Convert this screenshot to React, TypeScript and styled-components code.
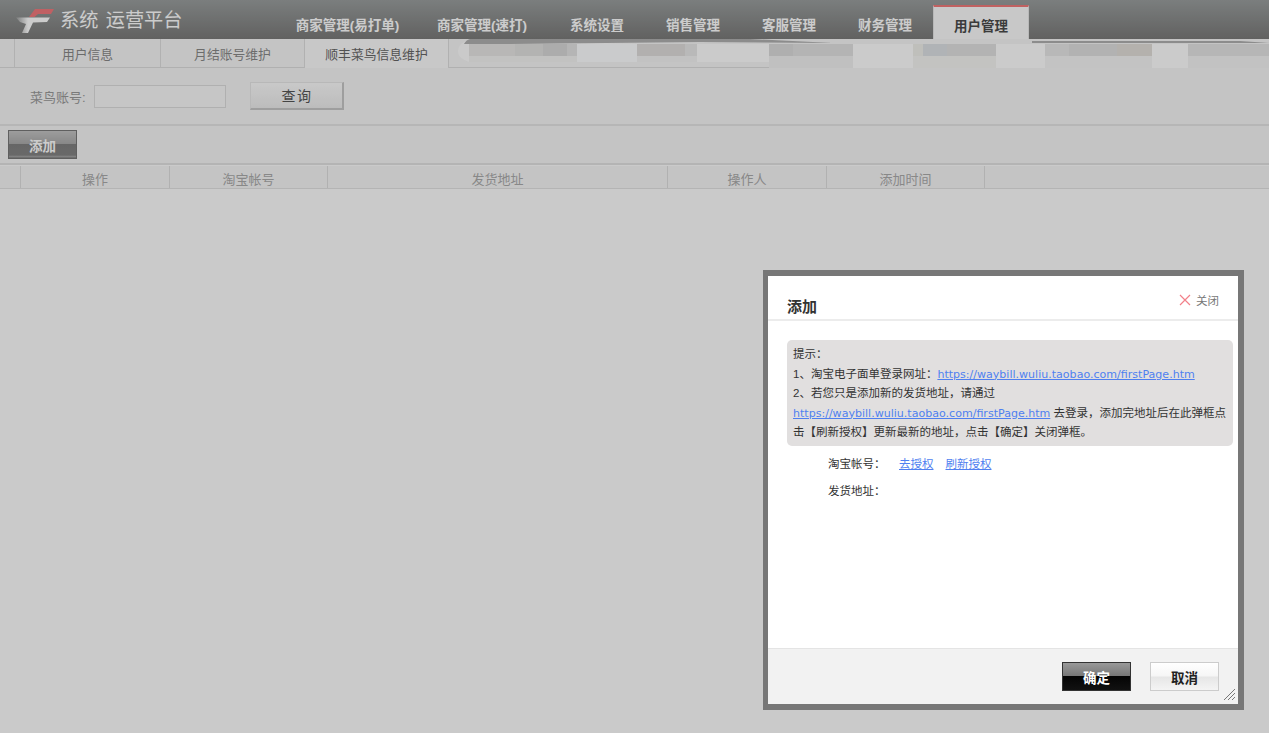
import React from "react";
import styled, { createGlobalStyle } from "styled-components";

const Global = createGlobalStyle`
  html, body { margin: 0; padding: 0; height: 100%; background: #fdfdfd; overflow: hidden; }
  body { font-family: "Liberation Sans", "Noto Sans CJK SC", sans-serif; }
  #root { height: 100%; }
  * { box-sizing: border-box; }
`;

const Page = styled.div`height: 733px; display: flex; flex-direction: column; position: relative; overflow: hidden;`;
const Header = styled.header`
  height: 39px; flex: none; display: flex; background: linear-gradient(#9a9e9e, #7a7a79);
`;
const Brand = styled.div`
  width: 280px; flex: none; display: flex; align-items: flex-start; padding: 8px 0 0 15px; gap: 5px;
  color: #fff; font-size: 19.2px; line-height: 26px; white-space: pre; word-spacing: 2px;
`;
const NavTab = styled.div<{ $active?: boolean; $w: number }>`
  width: ${p => p.$w}px; flex: none; display: flex; align-items: center; justify-content: center;
  font-size: 13.5px; font-weight: 700; padding-top: ${p => p.$active ? "4px" : "9px"};
  margin-top: ${p => p.$active ? "5px" : "0"};
  color: ${p => p.$active ? "#4a4a4a" : "#fff"};
  background: ${p => p.$active ? "#fbfbfb" : "transparent"};
  border-top: ${p => p.$active ? "2px solid #f07a7a" : "none"};
  border-left: ${p => p.$active ? "1px solid #e6e6e6" : "none"};
  border-right: ${p => p.$active ? "1px solid #e6e6e6" : "none"};
`;
const SubBar = styled.div`
  height: 29px; flex: none; display: flex; padding-left: 14px; background: #f6f6f6; border-bottom: 1px solid #dcdcdc;
`;
const SubTab = styled.div<{ $active?: boolean; $w: number }>`
  width: ${p => p.$w}px; flex: none; display: flex; align-items: center; justify-content: center;
  font-size: 12.8px; color: ${p => p.$active ? "#666" : "#888"};
  border-left: 1px solid #dedede; margin-bottom: ${p => p.$active ? "-1px" : "0"};
  background: ${p => p.$active ? "#fbfbfb" : "transparent"};
  border-right: ${p => p.$active ? "1px solid #dedede" : "none"};
`;
const Mosaic = styled.svg`position: absolute; left: 450px; top: 38px; display: block;`;
const QueryBar = styled.div`
  height: 58px; flex: none; display: flex; align-items: center; padding: 0 0 0 30px;
  background: #f5f5f5; border-bottom: 2px solid #e4e4e4;
`;
const QueryLabel = styled.label`font-size: 13px; color: #999; width: 64px; flex: none;`;
const QueryInput = styled.div`
  width: 132px; height: 23px; margin-top: 1px; border: 1px solid #ddd; background: #f8f8f8;
`;
const QueryButton = styled.button`
  width: 94px; height: 28px; margin: -1px 0 0 24px; padding: 0 0 0 1px; font: inherit; font-size: 14px; color: #555; letter-spacing: 1.5px;
  border: 1px solid #e6e6e6; border-right: 2px solid #c6c6c6; border-bottom: 2px solid #c6c6c6;
  background: linear-gradient(#fbfbfb, #ececec);
`;
const ActionBar = styled.div`
  height: 39px; flex: none; display: flex; align-items: flex-start; padding: 4px 0 0 8px;
  background: #f5f5f5; border-bottom: 2px solid #e2e2e2;
`;
const AddButton = styled.button`
  width: 69px; height: 29px; padding: 0; font: inherit; font-size: 13.5px; font-weight: 700; color: #fff;
  border: 1px solid #777; background: linear-gradient(#c4c4c4 0, #aaa 48%, #808080 50%, #848484 90%, #aaa 93%, #808080 100%);
`;
const TableHead = styled.div`
  height: 23px; flex: none; display: flex; padding-left: 20px; background: #f6f6f6; border-bottom: 1px solid #e2e2e2; margin-top: 1px; 
`;
const HeadCell = styled.div<{ $w: number }>`
  width: ${p => p.$w}px; flex: none; display: flex; align-items: center; justify-content: center;
  font-size: 13px; color: #aaa; border-left: 1px solid #dedede; padding-top: 3px;
  &:last-child { border-right: 1px solid #dedede; }
`;
const Mask = styled.div`position: absolute; inset: 0; background: rgba(0,0,0,.2);`;

const Dialog = styled.section`
  position: absolute; left: 763px; top: 270px; width: 481px; height: 440px;
  border: solid #777; border-width: 6px 6px 6px 5px; background: #fff; display: flex; flex-direction: column;
  font-size: 11.5px; color: #333;
`;
const DialogHead = styled.div`
  height: 45px; flex: none; display: flex; justify-content: space-between; border-bottom: 2px solid #ececec;
  padding: 0 19px;
`;
const DialogTitle = styled.h2`margin: 21px 0 0; font-size: 15px; line-height: 20px; font-weight: 700; color: #333;`;
const Close = styled.div`display: flex; gap: 5px; align-items: center; height: 16px; margin-top: 16px; color: #777; font-size: 11.5px;`;
const DialogBody = styled.div`flex: 1; padding: 19px 5px 0 19px; min-height: 0;`;
const Notice = styled.div`
  background: #e1dfdf; border-radius: 5px; padding: 5px 5px 4px 6px; line-height: 19.5px; height: 106px;
  color: #333; width: 446px;
`;
const Link = styled.a`color: #4f7ff0; text-decoration: underline; font-family: "DejaVu Sans", sans-serif; font-size: 11.05px; cursor: pointer;`;
const TextLink = styled.a`color: #4f7ff0; text-decoration: underline; cursor: pointer;`;
const FieldRow = styled.div`display: flex; align-items: center; padding-left: 41px; height: 20px; margin-top: 7px; gap: 19px;`;
const FieldLabel = styled.span`width: 52px; flex: none; white-space: nowrap;`;
const FieldLinks = styled.span`display: flex; gap: 12px;`;
const DialogFoot = styled.div`
  height: 56px; flex: none; display: flex; justify-content: flex-end; gap: 19px; padding: 13px 19px 0 0;
  background: #f2f2f2; border-top: 1px solid #e4e4e4; position: relative;
`;
const FootButton = styled.button<{ $primary?: boolean }>`
  width: 69px; height: 29px; padding: 0; font: inherit; font-size: 13.5px; font-weight: 700;
  color: ${p => p.$primary ? "#fff" : "#222"};
  border: 1px solid ${p => p.$primary ? "#333" : "#ccc"};
  background: ${p => p.$primary
    ? "linear-gradient(#999 0, #777 48%, #050505 50%, #111 100%)"
    : "linear-gradient(#fff 0, #f6f6f6 48%, #e6e6e6 52%, #f4f4f4 100%)"};
`;
const Grip = styled.svg`position: absolute; right: 2px; bottom: 3px; display: block;`;

const Logo = () => (
  <svg width="40" height="26" viewBox="0 0 40 26">
    <defs>
      <linearGradient id="streak" x1="0" x2="1" y1="0" y2="0">
        <stop offset="0" stopColor="#fff" stopOpacity="0.15" />
        <stop offset="0.35" stopColor="#fff" stopOpacity="1" />
      </linearGradient>
    </defs>
    <path d="M14 9 L20 1 L39 1 L36 6 L23 6 L19.5 9 Z" fill="#f0787c" />
    <path d="M1 9.5 L35 9.5 L32 14 L18 14.5 L13 25 L7 25 L11 16 L5 14 Z" fill="url(#streak)" />
  </svg>
);

const cells: [number, number, number, number, string][] = [
  [19, 6, 46, 12, "#b8b7b6"], [65, 6, 28, 12, "#b3b3b2"], [93, 6, 24, 12, "#acacac"], [117, 6, 10, 12, "#b5b5b5"],
  [19, 18, 108, 6, "#c2c2c1"], [127, 6, 60, 18, "#cacbcc"],
  [187, 6, 48, 12, "#b2b0af"], [235, 6, 12, 12, "#b9b9b9"], [187, 18, 60, 6, "#c2c2c2"], [247, 6, 72, 18, "#cbcbcb"],
  [319, 6, 24, 12, "#afafaf"], [343, 6, 60, 12, "#b4b4b4"], [319, 18, 84, 12, "#c0c0c0"],
  [403, 6, 60, 24, "#cbcbcb"], [463, 6, 10, 12, "#bfbfbb"], [473, 6, 24, 12, "#b0b3b6"], [497, 6, 49, 12, "#b3b3b3"], [463, 18, 83, 12, "#c3c3c1"],
  [546, 6, 49, 24, "#cbcbcb"], [595, 6, 24, 12, "#b8b8b8"], [619, 6, 48, 12, "#b2b2b2"], [667, 6, 35, 12, "#b4b1ad"], [595, 18, 107, 12, "#c3c3c3"],
  [702, 6, 36, 24, "#cbcbcb"], [738, 6, 81, 12, "#b6b6b6"], [738, 18, 81, 12, "#c2c2c2"],
];

const Redaction = () => (
  <Mosaic width="819" height="30" viewBox="0 0 819 30">
    <path d="M20 2 Q8 4 8 14 Q8 20 19 24 L19 6 L200 6 Z" fill="#cacaca" />
    <path d="M20 1 L300 1 L383 5 L250 4 L60 6 L14 6 Q16 2 20 1 Z" fill="#8c8c8c" />
    <path d="M582 3 L790 3 L819 5 L582 5 Z" fill="#8c8c8c" />
    <path d="M530 1 L790 1 L790 3 L582 3 L530 3 Z" fill="#c4c4c4" />
    {cells.map(([x, y, w, h, c], i) => <rect key={i} x={x} y={y} width={w} height={h} fill={c} />)}
  </Mosaic>
);

const COLON = "\uFF1A";
const COMMA = "\uFF0C";
const nav: [string, number][] = [["商家管理(易打单)", 135], ["商家管理(速打)", 134], ["系统设置", 96], ["销售管理", 96], ["客服管理", 96], ["财务管理", 96]];
const heads: [string, number][] = [["操作", 149], ["淘宝帐号", 158], ["发货地址", 340], ["操作人", 159], ["添加时间", 159]];
const URL = "https://waybill.wuliu.taobao.com/firstPage.htm";

export default function App() {
  return (
    <Page>
      <Global />
      <Header>
        <Brand><Logo />系统 运营平台</Brand>
        {nav.map(([t, w]) => <NavTab key={t} $w={w}>{t}</NavTab>)}
        <NavTab $w={96} $active>用户管理</NavTab>
      </Header>
      <SubBar>
        <SubTab $w={146}>用户信息</SubTab>
        <SubTab $w={144}>月结账号维护</SubTab>
        <SubTab $w={145} $active>顺丰菜鸟信息维护</SubTab>
      </SubBar>
      <QueryBar>
        <QueryLabel>菜鸟账号:</QueryLabel>
        <QueryInput />
        <QueryButton>查询</QueryButton>
      </QueryBar>
      <ActionBar><AddButton>添加</AddButton></ActionBar>
      <TableHead>
        {heads.map(([t, w]) => <HeadCell key={t} $w={w}>{t}</HeadCell>)}
      </TableHead>
      <Mask />
      <Redaction />
      <Dialog>
        <DialogHead>
          <DialogTitle>添加</DialogTitle>
          <Close>
            <svg width="12" height="12" viewBox="0 0 12 12"><path d="M1 1 L11 11 M11 1 L1 11" stroke="#f2808a" strokeWidth="1.2" fill="none" /></svg>
            关闭
          </Close>
        </DialogHead>
        <DialogBody>
          <Notice>
            {"提示" + COLON}<br />
            {"1、淘宝电子面单登录网址" + COLON}<Link>{URL}</Link><br />
            {"2、若您只是添加新的发货地址" + COMMA + "请通过"}<br />
            <Link>{URL}</Link>{" 去登录" + COMMA + "添加完地址后在此弹框点击【刷新授权】更新最新的地址" + COMMA + "点击【确定】关闭弹框。"}
          </Notice>
          <FieldRow>
            <FieldLabel>{"淘宝帐号" + COLON}</FieldLabel>
            <FieldLinks><TextLink>去授权</TextLink><TextLink>刷新授权</TextLink></FieldLinks>
          </FieldRow>
          <FieldRow>
            <FieldLabel>{"发货地址" + COLON}</FieldLabel>
          </FieldRow>
        </DialogBody>
        <DialogFoot>
          <FootButton $primary>确定</FootButton>
          <FootButton>取消</FootButton>
          <Grip width="13" height="13" viewBox="0 0 13 13"><path d="M1 12 L12 1 M5 12 L12 5 M9 12 L12 9" stroke="#777" strokeWidth="1" fill="none" /></Grip>
        </DialogFoot>
      </Dialog>
    </Page>
  );
}
